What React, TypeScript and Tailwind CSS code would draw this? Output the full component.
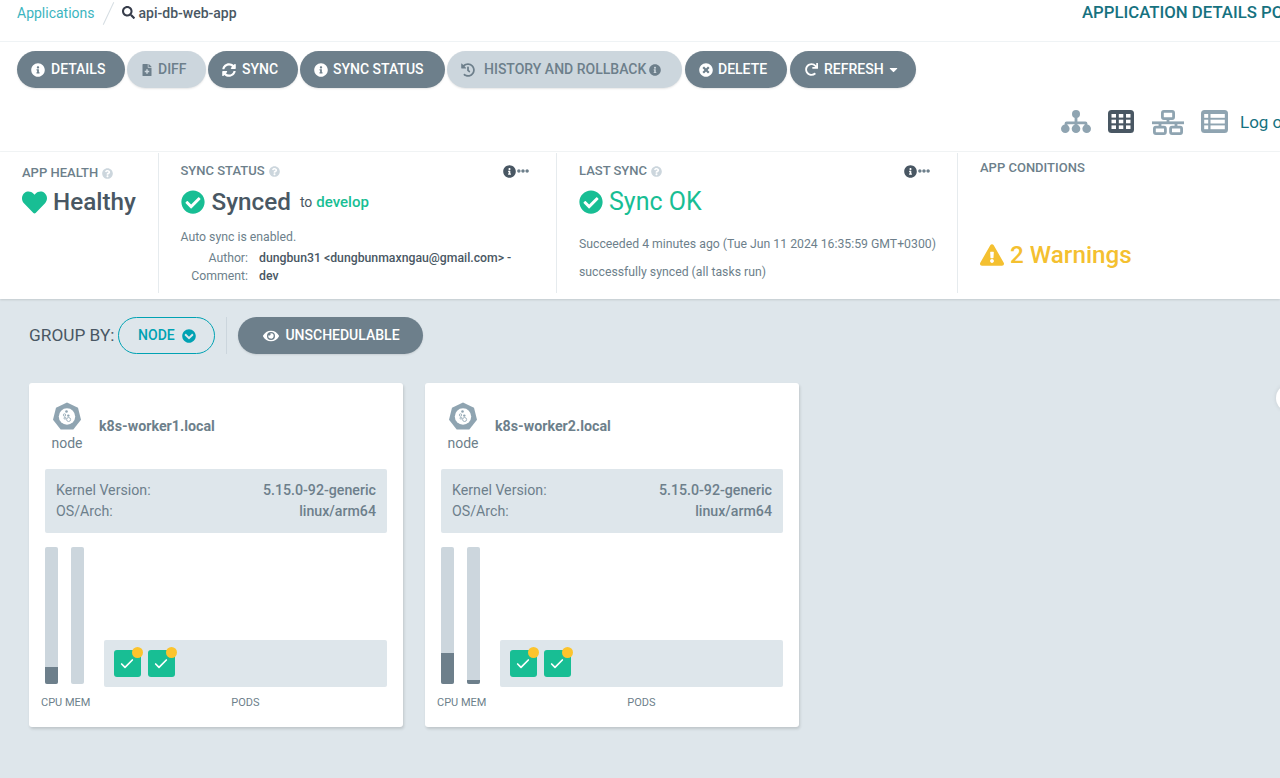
import React from 'react';
import { Check } from 'lucide-react';
import {
  FaCaretDown,
  FaCheckCircle,
  FaChevronCircleDown,
  FaEllipsisH,
  FaExclamationTriangle,
  FaEye,
  FaFileMedical,
  FaHeart,
  FaHistory,
  FaInfoCircle,
  FaQuestionCircle,
  FaRedo,
  FaSearch,
  FaSyncAlt,
  FaTimesCircle,
} from 'react-icons/fa';

const Pill: React.FC<{ disabled?: boolean; className?: string; children: React.ReactNode }> = ({ disabled, className, children }) => (
  <div
    className={`h-[37px] rounded-full flex items-center shrink-0 text-[14px] font-medium shadow-[0_1px_2px_rgba(0,0,0,0.1)] ${
      disabled ? 'bg-[#ccd6dd] text-[#6d7f8b]' : 'bg-[#6d7f8b] text-white'
    } ${className}`}
  >
    {children}
  </div>
);

const TreeIcon = () => (
  <svg width="30" height="23" viewBox="0 0 30 23" className="text-[#8fa4b1]" fill="currentColor">
    <circle cx="15" cy="4" r="4" />
    <rect x="13.6" y="6" width="2.8" height="11" />
    <path d="M3.6 17v-3.5a2 2 0 0 1 2-2h18.8a2 2 0 0 1 2 2V17h-2.8v-2.7H6.4V17z" />
    <circle cx="4.3" cy="18.7" r="4.3" />
    <circle cx="15" cy="18.7" r="4.3" />
    <circle cx="25.7" cy="18.7" r="4.3" />
  </svg>
);

const GridIcon = () => (
  <svg width="26" height="23" viewBox="0 0 26 23" className="text-[#495763]">
    <rect width="26" height="23" rx="3.5" fill="currentColor" />
    <g fill="#fff">
      <rect x="3.5" y="4" width="4.5" height="3.6" />
      <rect x="10.8" y="4" width="4.5" height="3.6" />
      <rect x="18" y="4" width="4.5" height="3.6" />
      <rect x="3.5" y="9.7" width="4.5" height="3.6" />
      <rect x="10.8" y="9.7" width="4.5" height="3.6" />
      <rect x="18" y="9.7" width="4.5" height="3.6" />
      <rect x="3.5" y="15.4" width="4.5" height="3.6" />
      <rect x="10.8" y="15.4" width="4.5" height="3.6" />
      <rect x="18" y="15.4" width="4.5" height="3.6" />
    </g>
  </svg>
);

const NetworkIcon = () => (
  <svg width="32" height="25" viewBox="0 0 32 25" fill="none" stroke="#8fa4b1" strokeWidth="2.8" className="mt-[1px]">
    <rect x="10.4" y="1.4" width="11.2" height="7.2" rx="1.5" />
    <path d="M16 9v5" />
    <path d="M0 12.8h32" />
    <path d="M8 13v4M24 13v4" />
    <rect x="2.4" y="17.2" width="11" height="6.4" rx="1.5" />
    <rect x="18.6" y="17.2" width="11" height="6.4" rx="1.5" />
  </svg>
);

const ListIcon = () => (
  <svg width="27" height="23" viewBox="0 0 27 23">
    <rect width="27" height="23" rx="3.5" fill="#8fa4b1" />
    <g fill="#fff">
      <rect x="3.2" y="4" width="4" height="3.8" />
      <rect x="9.5" y="4" width="14.3" height="3.8" />
      <rect x="3.2" y="9.7" width="4" height="3.8" />
      <rect x="9.5" y="9.7" width="14.3" height="3.8" />
      <rect x="3.2" y="15.4" width="4" height="3.8" />
      <rect x="9.5" y="15.4" width="14.3" height="3.8" />
    </g>
  </svg>
);

const NodeIcon = () => (
  <svg width="30" height="30" viewBox="0 0 30 30">
    <polygon points="15,0.5 26,5.8 29,17.8 21.3,27.5 8.7,27.5 1,17.8 4,5.8" fill="#8fa4b1" />
    <circle cx="15" cy="14.5" r="8.2" fill="#fff" />
    <circle cx="14.5" cy="9.5" r="1.3" fill="#8fa4b1" />
    <circle cx="12.5" cy="13" r="1.2" fill="none" stroke="#8fa4b1" strokeWidth="0.8" />
    <circle cx="16.3" cy="13.6" r="1.2" fill="#8fa4b1" />
    <circle cx="16.6" cy="17.5" r="2" fill="none" stroke="#8fa4b1" strokeWidth="0.8" />
    <circle cx="13" cy="16.2" r="1" fill="none" stroke="#8fa4b1" strokeWidth="0.8" />
  </svg>
);

const Bar: React.FC<{ used: number }> = ({ used }) => (
  <div className="w-[13px] h-[137px] bg-[#ccd6dd] rounded-[2px] flex flex-col justify-end overflow-hidden">
    <div className="bg-[#6d7f8b]" style={{ height: used }} />
  </div>
);

const Pod = () => (
  <div className="relative w-[27px] h-[27px] bg-[#18be94] rounded-[3px] flex items-center justify-center text-white">
    <Check size={16} strokeWidth={2.5} />
    <div className="absolute -top-[3px] -right-[2px] w-[11px] h-[11px] rounded-full bg-[#fcc42c]" />
  </div>
);

const NodeCard: React.FC<{ name: string; cpu: number; mem: number }> = ({ name, cpu, mem }) => (
  <div className="w-[374px] h-[344px] bg-white rounded-[3px] shadow-[1px_2px_3px_rgba(0,0,0,0.14)] pt-[19px] px-4 shrink-0">
    <div className="flex h-[67px]">
      <div className="w-11 flex flex-col items-center">
        <NodeIcon />
        <div className="text-[14px] leading-[18px] mt-[2px] text-[#6d7f8b]">node</div>
      </div>
      <div className="ml-[10px] mt-[14px] text-[14.25px] leading-[20px] font-bold text-[#6d7f8b]">{name}</div>
    </div>
    <div className="h-16 bg-[#dee6eb] rounded-[2px] px-[11px] pt-[11px] text-[14.2px] leading-[21px] text-[#6d7f8b]">
      <div className="flex justify-between">
        <span>Kernel Version:</span>
        <span className="font-medium">5.15.0-92-generic</span>
      </div>
      <div className="flex justify-between">
        <span>OS/Arch:</span>
        <span className="font-medium">linux/arm64</span>
      </div>
    </div>
    <div className="flex mt-[14px] h-[137px]">
      <div className="flex gap-[13px] w-[59px]">
        <Bar used={cpu} />
        <Bar used={mem} />
      </div>
      <div className="flex-1 flex items-end">
        <div className="w-full h-[47px] mb-[-3px] bg-[#dee6eb] rounded-[2px] flex items-center gap-[7px] pl-[9.5px]">
          <Pod />
          <Pod />
        </div>
      </div>
    </div>
    <div className="flex mt-[12px] text-[11px] leading-[14px] text-[#6d7f8b]">
      <div className="w-[59px] -ml-1 shrink-0 whitespace-nowrap">CPU MEM</div>
      <div className="flex-1 text-center pl-1">PODS</div>
    </div>
  </div>
);

const Label: React.FC<{ text: string; help?: boolean }> = ({ text, help = true }) => (
  <div className="flex items-center gap-1 text-[13px] leading-[16px] font-medium text-[#6d7f8b]">
    {text}
    {help && <FaQuestionCircle size={11} className="text-[#ccd6dd]" />}
  </div>
);

const Kebab = () => (
  <div className="flex items-center text-[#6d7f8b] mr-[27px]">
    <FaInfoCircle size={13} className="text-[#495763]" />
    <FaEllipsisH size={12} className="ml-[1px]" />
  </div>
);

const App: React.FC = () => {
  return (
    <div className="relative w-[1280px] h-[778px] overflow-hidden bg-[#dee6eb] font-['Roboto',sans-serif]">
      <div className="bg-white h-[152px] border-b border-[#f2f5f6]">
        <div className="h-[42px] border-b border-[#eff3f5] flex items-start">
          <div className="ml-[17px] mt-[4px] text-[14px] leading-[18px] text-[#3cb5c0]">Applications</div>
          <div className="ml-[13px] mt-[1px] w-[1px] h-[25px] bg-[#d5dde2] rotate-[25deg]" />
          <FaSearch size={13} className="ml-[13px] mt-[6px] text-[#363c4a]" />
          <div className="ml-[4px] mt-[4px] text-[14px] leading-[18px] font-medium text-[#495763]">api-db-web-app</div>
          <div className="flex-1" />
          <div className="w-[198px] mt-[3px] overflow-hidden whitespace-nowrap text-[16.75px] leading-[18px] font-medium text-[#16727f]">
            APPLICATION DETAILS POD LOGS
          </div>
        </div>
        <div className="flex gap-[2px] ml-[17px] mt-[9px]">
          <Pill className="w-[108px] pl-[14px] gap-[6px]"><FaInfoCircle size={14} />DETAILS</Pill>
          <Pill disabled className="w-[79px] pl-[14px] gap-[5px]"><FaFileMedical size={12} />DIFF</Pill>
          <Pill className="w-[90px] pl-[14px] gap-[6px]"><FaSyncAlt size={14} />SYNC</Pill>
          <Pill className="w-[145px] pl-[14px] gap-[5px]"><FaInfoCircle size={14} />SYNC STATUS</Pill>
          <Pill disabled className="w-[235px] pl-[14px]">
            <FaHistory size={14} className="mr-[9px]" />HISTORY AND ROLLBACK<FaInfoCircle size={12} className="ml-[3px]" />
          </Pill>
          <Pill className="w-[102px] ml-[1px] pl-[14px] gap-[5px]"><FaTimesCircle size={14} />DELETE</Pill>
          <Pill className="w-[126px] ml-[1px] pl-[15px] gap-[6px]"><FaRedo size={13} />REFRESH<FaCaretDown size={13} className="-ml-[3px]" /></Pill>
        </div>
        <div className="flex items-center mt-[21px] h-[25px]">
          <div className="flex-1" />
          <TreeIcon />
          <div className="ml-[17px]"><GridIcon /></div>
          <div className="ml-[18px]"><NetworkIcon /></div>
          <div className="ml-[17px]"><ListIcon /></div>
          <div className="w-[40px] ml-[12px] mt-[1px] overflow-hidden whitespace-nowrap text-[17px] leading-[20px] text-[#16727f]">Log out</div>
        </div>
      </div>

      <div className="bg-white h-[147px] flex shadow-[0_1px_2px_rgba(0,0,0,0.12)] relative">
        <div className="w-[159px] h-[140px] mt-[1px] border-r border-[#e6ebee] pl-[22px] pt-[12px] shrink-0">
          <Label text="APP HEALTH" />
          <div className="flex items-center gap-[6px] mt-[6px]">
            <FaHeart size={25} className="text-[#18be94]" />
            <span className="text-[24.25px] leading-[30px] font-medium text-[#495763]">Healthy</span>
          </div>
        </div>
        <div className="w-[398px] h-[140px] mt-[1px] border-r border-[#e6ebee] pl-[21.5px] pt-[10px] shrink-0">
          <div className="flex justify-between items-center">
            <Label text="SYNC STATUS" />
            <Kebab />
          </div>
          <div className="flex items-center mt-[7px] h-[32px]">
            <FaCheckCircle size={24} className="text-[#18be94]" />
            <span className="ml-[7px] text-[24.25px] font-medium text-[#495763]">Synced</span>
            <span className="ml-[9px] text-[14px] text-[#495763]">to</span>
            <span className="ml-[4px] text-[15px] font-medium text-[#18be94]">develop</span>
          </div>
          <div className="mt-[11px] text-[12.25px] leading-[16px] text-[#6d7f8b]">Auto sync is enabled.</div>
          <div className="grid grid-cols-[67.5px_1fr] gap-x-[11px] mt-[4px] text-[12.25px] leading-[18px] text-[#6d7f8b]">
            <div className="text-right">Author:</div>
            <div className="font-medium text-[#495763] whitespace-nowrap">dungbun31 &lt;dungbunmaxngau@gmail.com&gt; -</div>
            <div className="text-right">Comment:</div>
            <div className="font-medium text-[#495763]">dev</div>
          </div>
        </div>
        <div className="w-[401px] h-[140px] mt-[1px] border-r border-[#e6ebee] pl-[22px] pt-[10px] shrink-0">
          <div className="flex justify-between items-center">
            <Label text="LAST SYNC" />
            <Kebab />
          </div>
          <div className="flex items-center mt-[7px] h-[32px]">
            <FaCheckCircle size={24} className="text-[#18be94]" />
            <span className="ml-[6px] text-[25px] text-[#18be94]">Sync OK</span>
          </div>
          <div className="mt-[17px] text-[12.25px] leading-[18px] text-[#6d7f8b] whitespace-nowrap">Succeeded 4 minutes ago (Tue Jun 11 2024 16:35:59 GMT+0300)</div>
          <div className="mt-[10px] text-[12.25px] leading-[18px] text-[#6d7f8b]">successfully synced (all tasks run)</div>
        </div>
        <div className="flex-1 pl-[22px] pt-[8px]">
          <Label text="APP CONDITIONS" help={false} />
          <div className="flex items-center gap-[6px] mt-[64px] text-[#f4c030]">
            <FaExclamationTriangle size={24} />
            <span className="text-[24.25px] leading-[30px] font-medium">2 Warnings</span>
          </div>
        </div>
      </div>

      <div className="flex items-center ml-[29px] mt-[18px] h-[37px]">
        <span className="text-[17.25px] leading-[34px] mb-[2px] text-[#495763]">GROUP BY:</span>
        <div className="ml-[4px] w-[97px] h-[37px] rounded-full border border-[#00a2b3] flex items-center justify-center gap-[7px] text-[14px] font-medium text-[#00a2b3]">
          NODE
          <FaChevronCircleDown size={14} />
        </div>
        <div className="ml-[11px] w-[1px] h-[37px] bg-[#ccd6dd]" />
        <Pill className="ml-[11px] w-[185px] pl-[25px] gap-[6px]">
          <FaEye size={16} />UNSCHEDULABLE
        </Pill>
      </div>

      <div className="flex gap-[22px] ml-[29px] mt-[29px]">
        <NodeCard name="k8s-worker1.local" cpu={17} mem={0} />
        <NodeCard name="k8s-worker2.local" cpu={31} mem={4} />
      </div>

      <div className="absolute left-[1276px] top-[384px] w-7 h-7 rounded-full bg-white shadow-[0_0_4px_rgba(0,0,0,0.1)]" />
    </div>
  );
};

export default App;
